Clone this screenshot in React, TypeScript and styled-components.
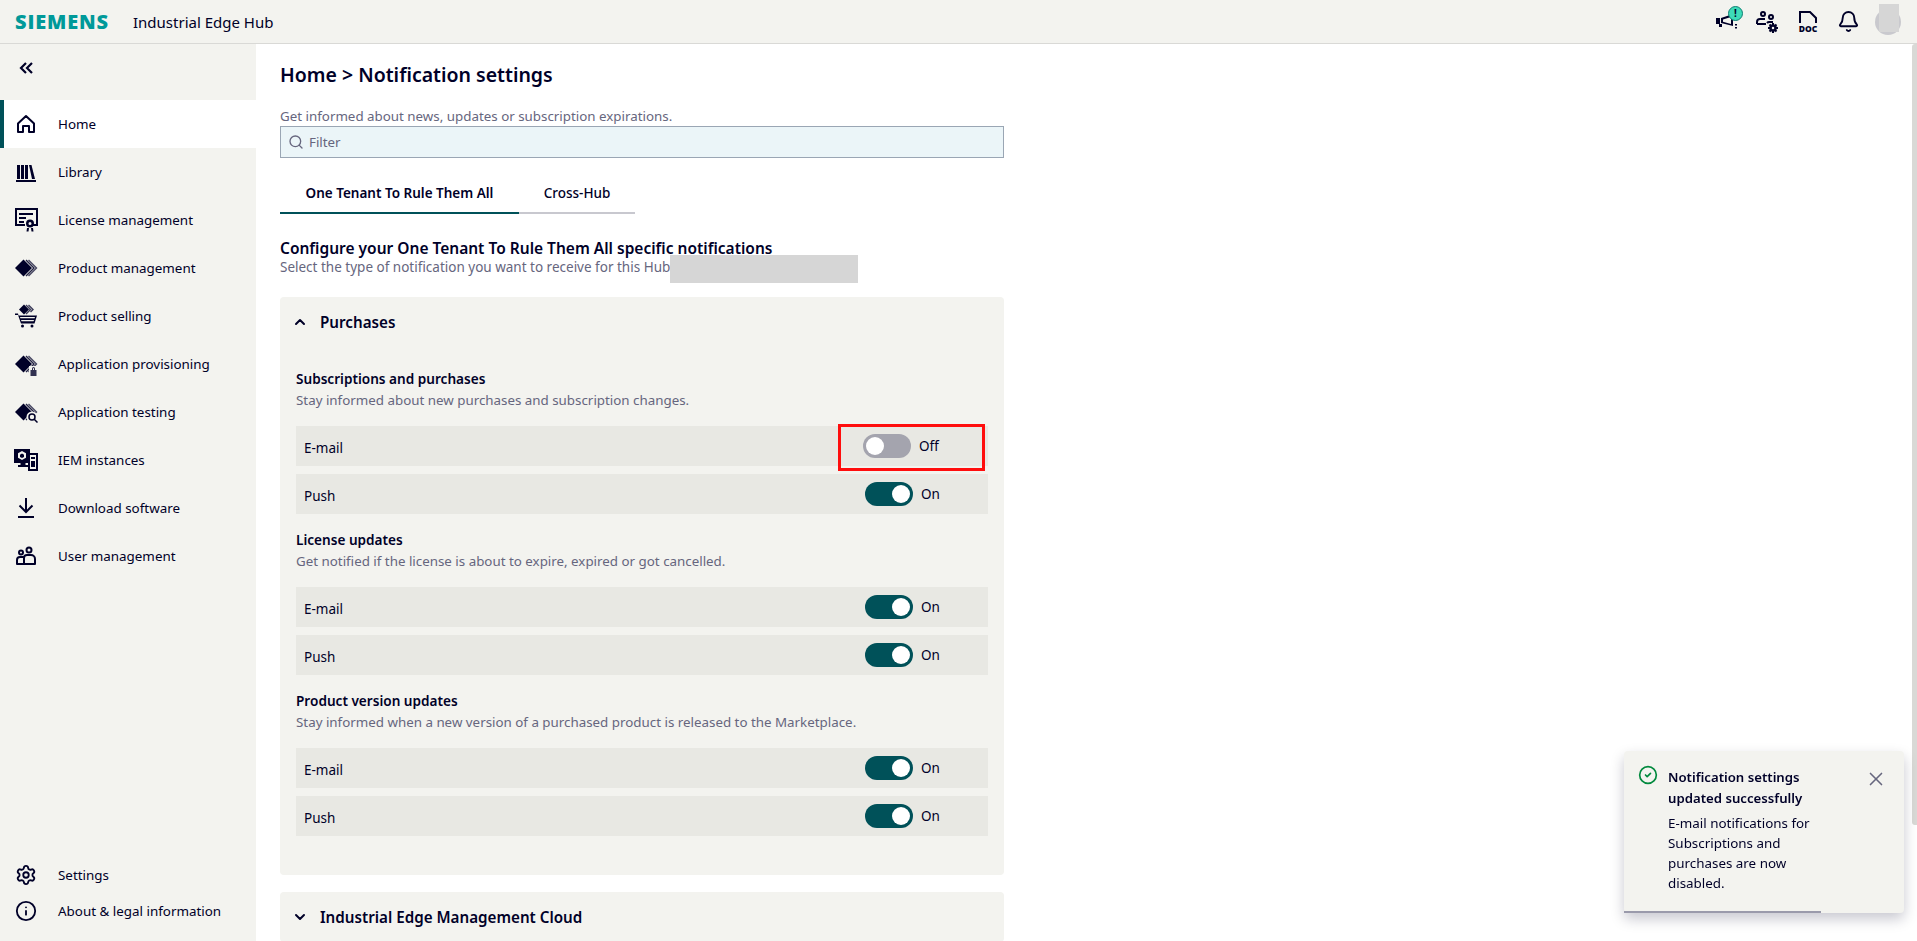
import React from 'react';
import styled, { createGlobalStyle } from 'styled-components';
import { Bell, ChevronDown, ChevronUp, CircleCheck, Info, Search, Settings, X } from 'lucide-react';

const ink = '#000028';
const muted = '#66667e';
const panel = '#f3f3ef';
const rowBg = '#e8e8e3';
const teal = '#005159';

const GlobalStyle = createGlobalStyle`
  html, body {
    margin: 0;
    height: 100%;
    overflow: hidden;
    background: #fff;
    color: ${ink};
    font-family: 'Noto Sans', 'Open Sans', sans-serif;
  }
`;

const Page = styled.div`
  display: flex;
  flex-direction: column;
  height: 100vh;
  overflow: hidden;
`;

const TopBar = styled.header`
  display: flex;
  align-items: center;
  flex: none;
  height: 43px;
  padding-left: 15px;
  background: ${panel};
  border-bottom: 1px solid #d9d9d6;
`;

const Logo = styled.span`
  width: 118px;
  font-family: 'Open Sans', sans-serif;
  font-size: 20px;
  font-weight: 800;
  letter-spacing: 0.85px;
  color: #009999;
`;

const AppName = styled.span`
  font-size: 15px;
`;

const TopIcons = styled.div`
  display: flex;
  align-items: center;
  margin-left: auto;
`;

const TopIcon = styled.div<{ $width: number }>`
  position: relative;
  display: flex;
  justify-content: center;
  width: ${(p) => p.$width}px;
`;

const Badge = styled.span`
  position: absolute;
  top: -8px;
  left: 20px;
  width: 15px;
  height: 15px;
  box-sizing: border-box;
  border: 1px solid #0f7f73;
  border-radius: 50%;
  background: #3ddbb8;
  color: ${ink};
  font-size: 10px;
  font-weight: 700;
  line-height: 13px;
  text-align: center;
`;

const Avatar = styled.div`
  position: relative;
  width: 26px;
  height: 26px;
  margin: 0 16px 0 7px;
  border-radius: 50%;
  background: #c9c9ce;
`;

const AvatarMask = styled.div`
  position: absolute;
  top: -5px;
  left: 4px;
  width: 20px;
  height: 28px;
  background: #d6d6d6;
`;

const Body = styled.div`
  display: flex;
  flex: 1;
  min-height: 0;
`;

const Sidebar = styled.aside`
  display: flex;
  flex-direction: column;
  flex: none;
  width: 256px;
  background: ${panel};
`;

const Collapse = styled.div`
  display: flex;
  align-items: flex-start;
  height: 56px;
  padding: 16px 0 0 18px;
  box-sizing: border-box;
`;

const NavItem = styled.div<{ $active?: boolean }>`
  display: flex;
  align-items: center;
  flex: none;
  height: 48px;
  box-sizing: border-box;
  font-size: 13.4px;
  background: ${(p) => (p.$active ? '#fff' : 'transparent')};
  border-left: 4px solid ${(p) => (p.$active ? teal : 'transparent')};
`;

const FooterItem = styled(NavItem)`
  height: 36px;
`;

const NavIcon = styled.span`
  display: flex;
  justify-content: center;
  flex: none;
  width: 44px;
  margin-right: 10px;
`;

const SidebarFooter = styled.div`
  margin-top: auto;
  padding-bottom: 12px;
`;

const Main = styled.main`
  position: relative;
  flex: 1;
  min-width: 0;
  padding: 19px 0 0 24px;
  overflow: hidden;
`;

const Column = styled.div`
  width: 724px;
`;

const Title = styled.h1`
  margin: 0;
  font-size: 19.5px;
  font-weight: 600;
  line-height: 24px;
`;

const Subtitle = styled.p`
  margin: 20px 0 1px;
  font-size: 13.35px;
  line-height: 18px;
  color: ${muted};
`;

const Filter = styled.div`
  display: flex;
  align-items: center;
  gap: 5px;
  height: 32px;
  padding-left: 7px;
  box-sizing: border-box;
  background: #ebf5f8;
  border: 1px solid #9aa6b4;
  font-size: 13.33px;
  color: ${muted};
`;

const Tabs = styled.div`
  display: flex;
  margin-top: 16px;
`;

const Tab = styled.div<{ $active?: boolean; $width: number }>`
  display: flex;
  align-items: center;
  justify-content: center;
  width: ${(p) => p.$width}px;
  height: 40px;
  box-sizing: border-box;
  font-size: 13.5px;
  font-weight: ${(p) => (p.$active ? 600 : 500)};
  border-bottom: 2px solid ${(p) => (p.$active ? teal : '#c8c8cf')};
`;

const Heading = styled.h2`
  margin: 24px 0 0;
  font-size: 15.5px;
  font-weight: 600;
  line-height: 20px;
`;

const SelectLine = styled.div`
  display: flex;
  align-items: flex-start;
  height: 18px;
  font-size: 13.5px;
  line-height: 18px;
  color: ${muted};
`;

const Redaction = styled.div`
  flex: none;
  width: 188px;
  height: 28px;
  margin-top: -3px;
  background: #d6d6d6;
`;

const Card = styled.section`
  margin-bottom: 17px;
  border-radius: 4px;
  background: ${panel};

  &:first-of-type {
    margin-top: 21px;
  }
`;

const CardHeader = styled.div`
  display: flex;
  align-items: center;
  gap: 12px;
  height: 50px;
  padding-left: 12px;
  font-size: 15.2px;
  font-weight: 600;
`;

const CardBody = styled.div`
  display: flex;
  flex-direction: column;
  gap: 16px;
  padding: 22px 16px 39px;
`;

const GroupTitle = styled.h3`
  margin: 0;
  font-size: 13.6px;
  font-weight: 600;
  line-height: 20px;
`;

const GroupHint = styled.p`
  margin: 2px 0 17px;
  font-size: 13.35px;
  line-height: 18px;
  color: ${muted};
`;

const Rows = styled.div`
  display: flex;
  flex-direction: column;
  gap: 8px;
`;

const Row = styled.div`
  position: relative;
  display: flex;
  align-items: center;
  justify-content: space-between;
  height: 40px;
  padding-left: 8px;
  background: ${rowBg};
  font-size: 13.5px;
`;

const RowLabel = styled.span`
  padding-top: 4px;
`;

const Control = styled.div<{ $on: boolean }>`
  display: flex;
  align-items: center;
  gap: 8px;
  width: 123px;
  margin-right: ${(p) => (p.$on ? 0 : 2)}px;
  box-sizing: border-box;
  font-size: 13.5px;
`;

const Track = styled.span<{ $on: boolean }>`
  display: flex;
  align-items: center;
  justify-content: ${(p) => (p.$on ? 'flex-end' : 'flex-start')};
  flex: none;
  width: 48px;
  height: 24px;
  padding: 0 3px;
  box-sizing: border-box;
  border-radius: 12px;
  background: ${(p) => (p.$on ? teal : '#a4a4ae')};
`;

const Knob = styled.span`
  width: 18px;
  height: 18px;
  border-radius: 50%;
  background: #fff;
`;

const Highlight = styled.div`
  position: absolute;
  top: -2px;
  left: 542px;
  width: 147px;
  height: 47px;
  box-sizing: border-box;
  border: 3px solid #ff0d0d;
  pointer-events: none;
`;

const ScrollThumb = styled.div`
  position: absolute;
  top: 0;
  right: 0;
  width: 5px;
  height: 781px;
  border-radius: 3px 0 0 3px;
  background: #d9d9d6;
`;

const Toast = styled.div`
  position: fixed;
  top: 751px;
  left: 1624px;
  display: flex;
  width: 280px;
  height: 162px;
  padding: 14px 0 0 14px;
  box-sizing: border-box;
  border-radius: 4px;
  background: ${panel};
  box-shadow: 0 6px 14px rgba(0, 0, 40, 0.22);
`;

const ToastProgress = styled.div`
  position: absolute;
  left: 0;
  bottom: 0;
  width: 197px;
  height: 2px;
  background: #9a9aab;
`;

const ToastText = styled.div`
  width: 150px;
  margin: 2px 0 0 10px;
  font-size: 13.4px;
  line-height: 20px;
`;

const ToastTitle = styled.div`
  font-size: 13.2px;
  font-weight: 600;
  line-height: 21px;
  margin-bottom: 4px;
`;

const ToastClose = styled.span`
  position: absolute;
  top: 17px;
  right: 17px;
  display: flex;
  color: ${muted};
`;

const DiamondStack = () => (
  <>
    <path d="M1 12 9.500 3.500 18 12l-8.500 8.500Z" />
    <path d="M12.500 3.500 21 12l-8.500 8.500-1-1L19 12l-7.500-7.500Z" opacity={0.85} />
    <path d="M15 3.500 23.500 12 15 20.500l-1-1L21.500 12 14 4.500Z" opacity={0.7} />
  </>
);

const Glyph: React.FC<{ children: React.ReactNode }> = ({ children }) => (
  <svg width={24} height={24} viewBox="0 0 24 24" fill={ink} aria-hidden>
    {children}
  </svg>
);

const HomeIcon = () => (
  <svg width={20} height={20} viewBox="0 0 20 20" fill="none" stroke={ink} strokeWidth={2} aria-hidden>
    <path d="M2 9.500 10 2l8 7.500V18h-5v-6H7v6H2Z" strokeLinejoin="round" />
  </svg>
);

const LibraryIcon = () => (
  <Glyph>
    <path d="M3 5h3v14H3ZM7 5h3v14H7ZM11 5h3v14h-3ZM15 5h2.500L21 19h-3ZM2 20h20v2H2Z" />
  </Glyph>
);

const LicenseIcon = () => (
  <Glyph>
    <path d="M1 0h23v18h-6v-2h4V2H3v14h8v2H1Z" />
    <path d="M5 5h14v2H5ZM5 9h7v2H5ZM5 13h5v2H5Z" />
    <path d="M16 11.500a4 4 0 1 1 0 8 4 4 0 0 1 0-8Zm0 2.500a1.500 1.500 0 1 0 0 3 1.500 1.500 0 0 0 0-3Z" />
    <path d="M13 20h2l-.5 3.500h-2ZM17 20h2l.5 3.500h-2Z" />
  </Glyph>
);

const StackIcon = () => (
  <Glyph>
    <DiamondStack />
  </Glyph>
);

const SellingIcon = () => (
  <Glyph>
    <path d="M5 5.500 10 .5l5 5-5 5Z" />
    <path d="M12.500 .5l5 5-5 5-1-1 4-4-4-4ZM15 .5l5 5-3 3-1-1 2-2-4-4Z" opacity={0.75} />
    <path d="M1 9.500h3l.5 2H23l-2.500 8H7L4 11H1Z" />
    <path d="M6 13h15l-.4 1.200H6.400ZM7 16h13l-.4 1.200H7.500Z" fill={panel} />
    <circle cx={8.500} cy={22} r={1.500} />
    <circle cx={18} cy={22} r={1.500} />
  </Glyph>
);

const ProvisioningIcon = () => (
  <Glyph>
    <DiamondStack />
    <path d="M15 14h9v9h-9Z" fill={panel} />
    <path d="M16.500 18h6v6h-6Zm1.500 0v-1.500a1.500 1.500 0 0 1 3 0V18h-1v-1.500a.5.5 0 0 0-1 0V18Z" opacity={0.8} />
  </Glyph>
);

const TestingIcon = () => (
  <Glyph>
    <DiamondStack />
    <circle cx={18} cy={17} r={5.500} fill={panel} />
    <circle cx={18} cy={17} r={3} fill="none" stroke={ink} strokeWidth={1.500} />
    <path d="M20 19l3.500 3.500" stroke={ink} strokeWidth={1.500} />
  </Glyph>
);

const InstancesIcon = () => (
  <Glyph>
    <path d="M0 1h16v14h-4.500v2H14v2H4v-2h2.500v-2H0Z" />
    <path d="M8 3l4 2.200v4.600L8 12l-4-2.200V5.200Z" fill={panel} />
    <path d="M8 5.500l2 1.200v2.200L8 10 6 8.900V6.700Z" />
    <path d="M14 5h10v18H14Zm2 2v14h6V7Z" fillRule="evenodd" />
    <path d="M17 9h4v2h-4ZM17 13h4v6h-4Z" />
  </Glyph>
);

const DownloadIcon = () => (
  <svg width={24} height={24} viewBox="0 0 24 24" fill="none" stroke={ink} strokeWidth={2} aria-hidden>
    <path d="M12 2v13M5.500 9.500 12 16l6.500-6.500M4 21h16" />
  </svg>
);

const UsersIcon = () => (
  <svg width={20} height={20} viewBox="0 0 20 20" fill="none" stroke={ink} strokeWidth={2} aria-hidden>
    <circle cx={13} cy={4} r={2.500} />
    <circle cx={5} cy={6.500} r={2} />
    <path d="M1 18v-4a3 3 0 0 1 3-3h4v7ZM8 18v-6a3 3 0 0 1 3-3h4a4 4 0 0 1 4 4v5ZM1 18h18" strokeLinejoin="round" />
  </svg>
);

const CollapseIcon = () => (
  <svg width={16} height={16} viewBox="0 0 16 16" fill="none" stroke={ink} strokeWidth={2.200} aria-hidden>
    <path d="M8 3 3 8l5 5M14 3 9 8l5 5" />
  </svg>
);

const MegaphoneIcon = () => (
  <svg width={22} height={16} viewBox="0 0 22 16" fill={ink} aria-hidden>
    <path d="M0 4h4v6H0ZM5 4l12-4v12L5 9Zm2 1.500v2.200l8 2.200V3Z" fillRule="evenodd" />
    <path d="M3 10h3v3H3ZM19 10h2v1.500h-2ZM19 13h2v1.500h-2Z" />
  </svg>
);

const TeamIcon = () => (
  <svg width={24} height={24} viewBox="0 0 24 24" fill="none" stroke={ink} strokeWidth={2} aria-hidden>
    <circle cx={8} cy={4} r={2} />
    <circle cx={16} cy={7} r={2} />
    <path d="M2 14v-2a3 3 0 0 1 3-3h5" />
    <path d="M2 14h9M12 13a3 3 0 0 1 3-1h3" />
    <circle cx={18} cy={18} r={2.500} strokeWidth={2.500} />
    <path d="M18 13v2M18 21v2M13 18h2M21 18h2M14.500 14.500l1.500 1.500M20 20l1.500 1.500M21.500 14.500 20 16M16 20l-1.500 1.500" />
  </svg>
);

const DocIcon = () => (
  <svg width={24} height={24} viewBox="0 0 24 24" aria-hidden>
    <path d="M4 13V2h10l6 6v5" fill="none" stroke={ink} strokeWidth={2} />
    <text x={12} y={22} textAnchor="middle" fontSize={8.500} fontWeight={800} fill={ink} fontFamily="'Open Sans', sans-serif">
      DOC
    </text>
  </svg>
);

type Entry = { label: string; icon: React.ReactNode; active?: boolean };

const navItems: Entry[] = [
  { label: 'Home', icon: <HomeIcon />, active: true },
  { label: 'Library', icon: <LibraryIcon /> },
  { label: 'License management', icon: <LicenseIcon /> },
  { label: 'Product management', icon: <StackIcon /> },
  { label: 'Product selling', icon: <SellingIcon /> },
  { label: 'Application provisioning', icon: <ProvisioningIcon /> },
  { label: 'Application testing', icon: <TestingIcon /> },
  { label: 'IEM instances', icon: <InstancesIcon /> },
  { label: 'Download software', icon: <DownloadIcon /> },
  { label: 'User management', icon: <UsersIcon /> },
];

const groups = [
  {
    title: 'Subscriptions and purchases',
    hint: 'Stay informed about new purchases and subscription changes.',
    email: false,
  },
  {
    title: 'License updates',
    hint: 'Get notified if the license is about to expire, expired or got cancelled.',
    email: true,
  },
  {
    title: 'Product version updates',
    hint: 'Stay informed when a new version of a purchased product is released to the Marketplace.',
    email: true,
  },
];

const SettingRow: React.FC<{ label: string; on: boolean }> = ({ label, on }) => (
  <Row>
    <RowLabel>{label}</RowLabel>
    <Control $on={on}>
      <Track $on={on}>
        <Knob />
      </Track>
      {on ? 'On' : 'Off'}
    </Control>
    {!on && <Highlight />}
  </Row>
);

export default function App() {
  return (
    <Page>
      <GlobalStyle />
      <TopBar>
        <Logo>SIEMENS</Logo>
        <AppName>Industrial Edge Hub</AppName>
        <TopIcons>
          <TopIcon $width={38}>
            <MegaphoneIcon />
            <Badge>!</Badge>
          </TopIcon>
          <TopIcon $width={42}>
            <TeamIcon />
          </TopIcon>
          <TopIcon $width={40}>
            <DocIcon />
          </TopIcon>
          <TopIcon $width={40}>
            <Bell size={23} color={ink} strokeWidth={2} />
          </TopIcon>
          <Avatar>
            <AvatarMask />
          </Avatar>
        </TopIcons>
      </TopBar>
      <Body>
        <Sidebar>
          <Collapse>
            <CollapseIcon />
          </Collapse>
          {navItems.map((item) => (
            <NavItem key={item.label} $active={item.active}>
              <NavIcon>{item.icon}</NavIcon>
              {item.label}
            </NavItem>
          ))}
          <SidebarFooter>
            <FooterItem>
              <NavIcon>
                <Settings size={22} color={ink} strokeWidth={2} />
              </NavIcon>
              Settings
            </FooterItem>
            <FooterItem>
              <NavIcon>
                <Info size={22} color={ink} strokeWidth={2} />
              </NavIcon>
              About &amp; legal information
            </FooterItem>
          </SidebarFooter>
        </Sidebar>
        <Main>
          <Column>
            <Title>Home &gt; Notification settings</Title>
            <Subtitle>Get informed about news, updates or subscription expirations.</Subtitle>
            <Filter>
              <Search size={16} color={muted} />
              Filter
            </Filter>
            <Tabs>
              <Tab $active $width={239}>
                One Tenant To Rule Them All
              </Tab>
              <Tab $width={116}>Cross-Hub</Tab>
            </Tabs>
            <Heading>Configure your One Tenant To Rule Them All specific notifications</Heading>
            <SelectLine>
              Select the type of notification you want to receive for this Hub
              <Redaction />
            </SelectLine>
            <Card>
              <CardHeader>
                <ChevronUp size={16} color={ink} strokeWidth={3} />
                Purchases
              </CardHeader>
              <CardBody>
                {groups.map((group) => (
                  <div key={group.title}>
                    <GroupTitle>{group.title}</GroupTitle>
                    <GroupHint>{group.hint}</GroupHint>
                    <Rows>
                      <SettingRow label="E-mail" on={group.email} />
                      <SettingRow label="Push" on />
                    </Rows>
                  </div>
                ))}
              </CardBody>
            </Card>
            <Card>
              <CardHeader>
                <ChevronDown size={16} color={ink} strokeWidth={3} />
                Industrial Edge Management Cloud
              </CardHeader>
            </Card>
          </Column>
          <ScrollThumb />
        </Main>
      </Body>
      <Toast>
        <CircleCheck size={20} color="#00893d" strokeWidth={2} />
        <ToastText>
          <ToastTitle>Notification settings updated successfully</ToastTitle>
          E-mail notifications for Subscriptions and purchases are now disabled.
        </ToastText>
        <ToastClose>
          <X size={22} strokeWidth={1.800} />
        </ToastClose>
        <ToastProgress />
      </Toast>
    </Page>
  );
}
